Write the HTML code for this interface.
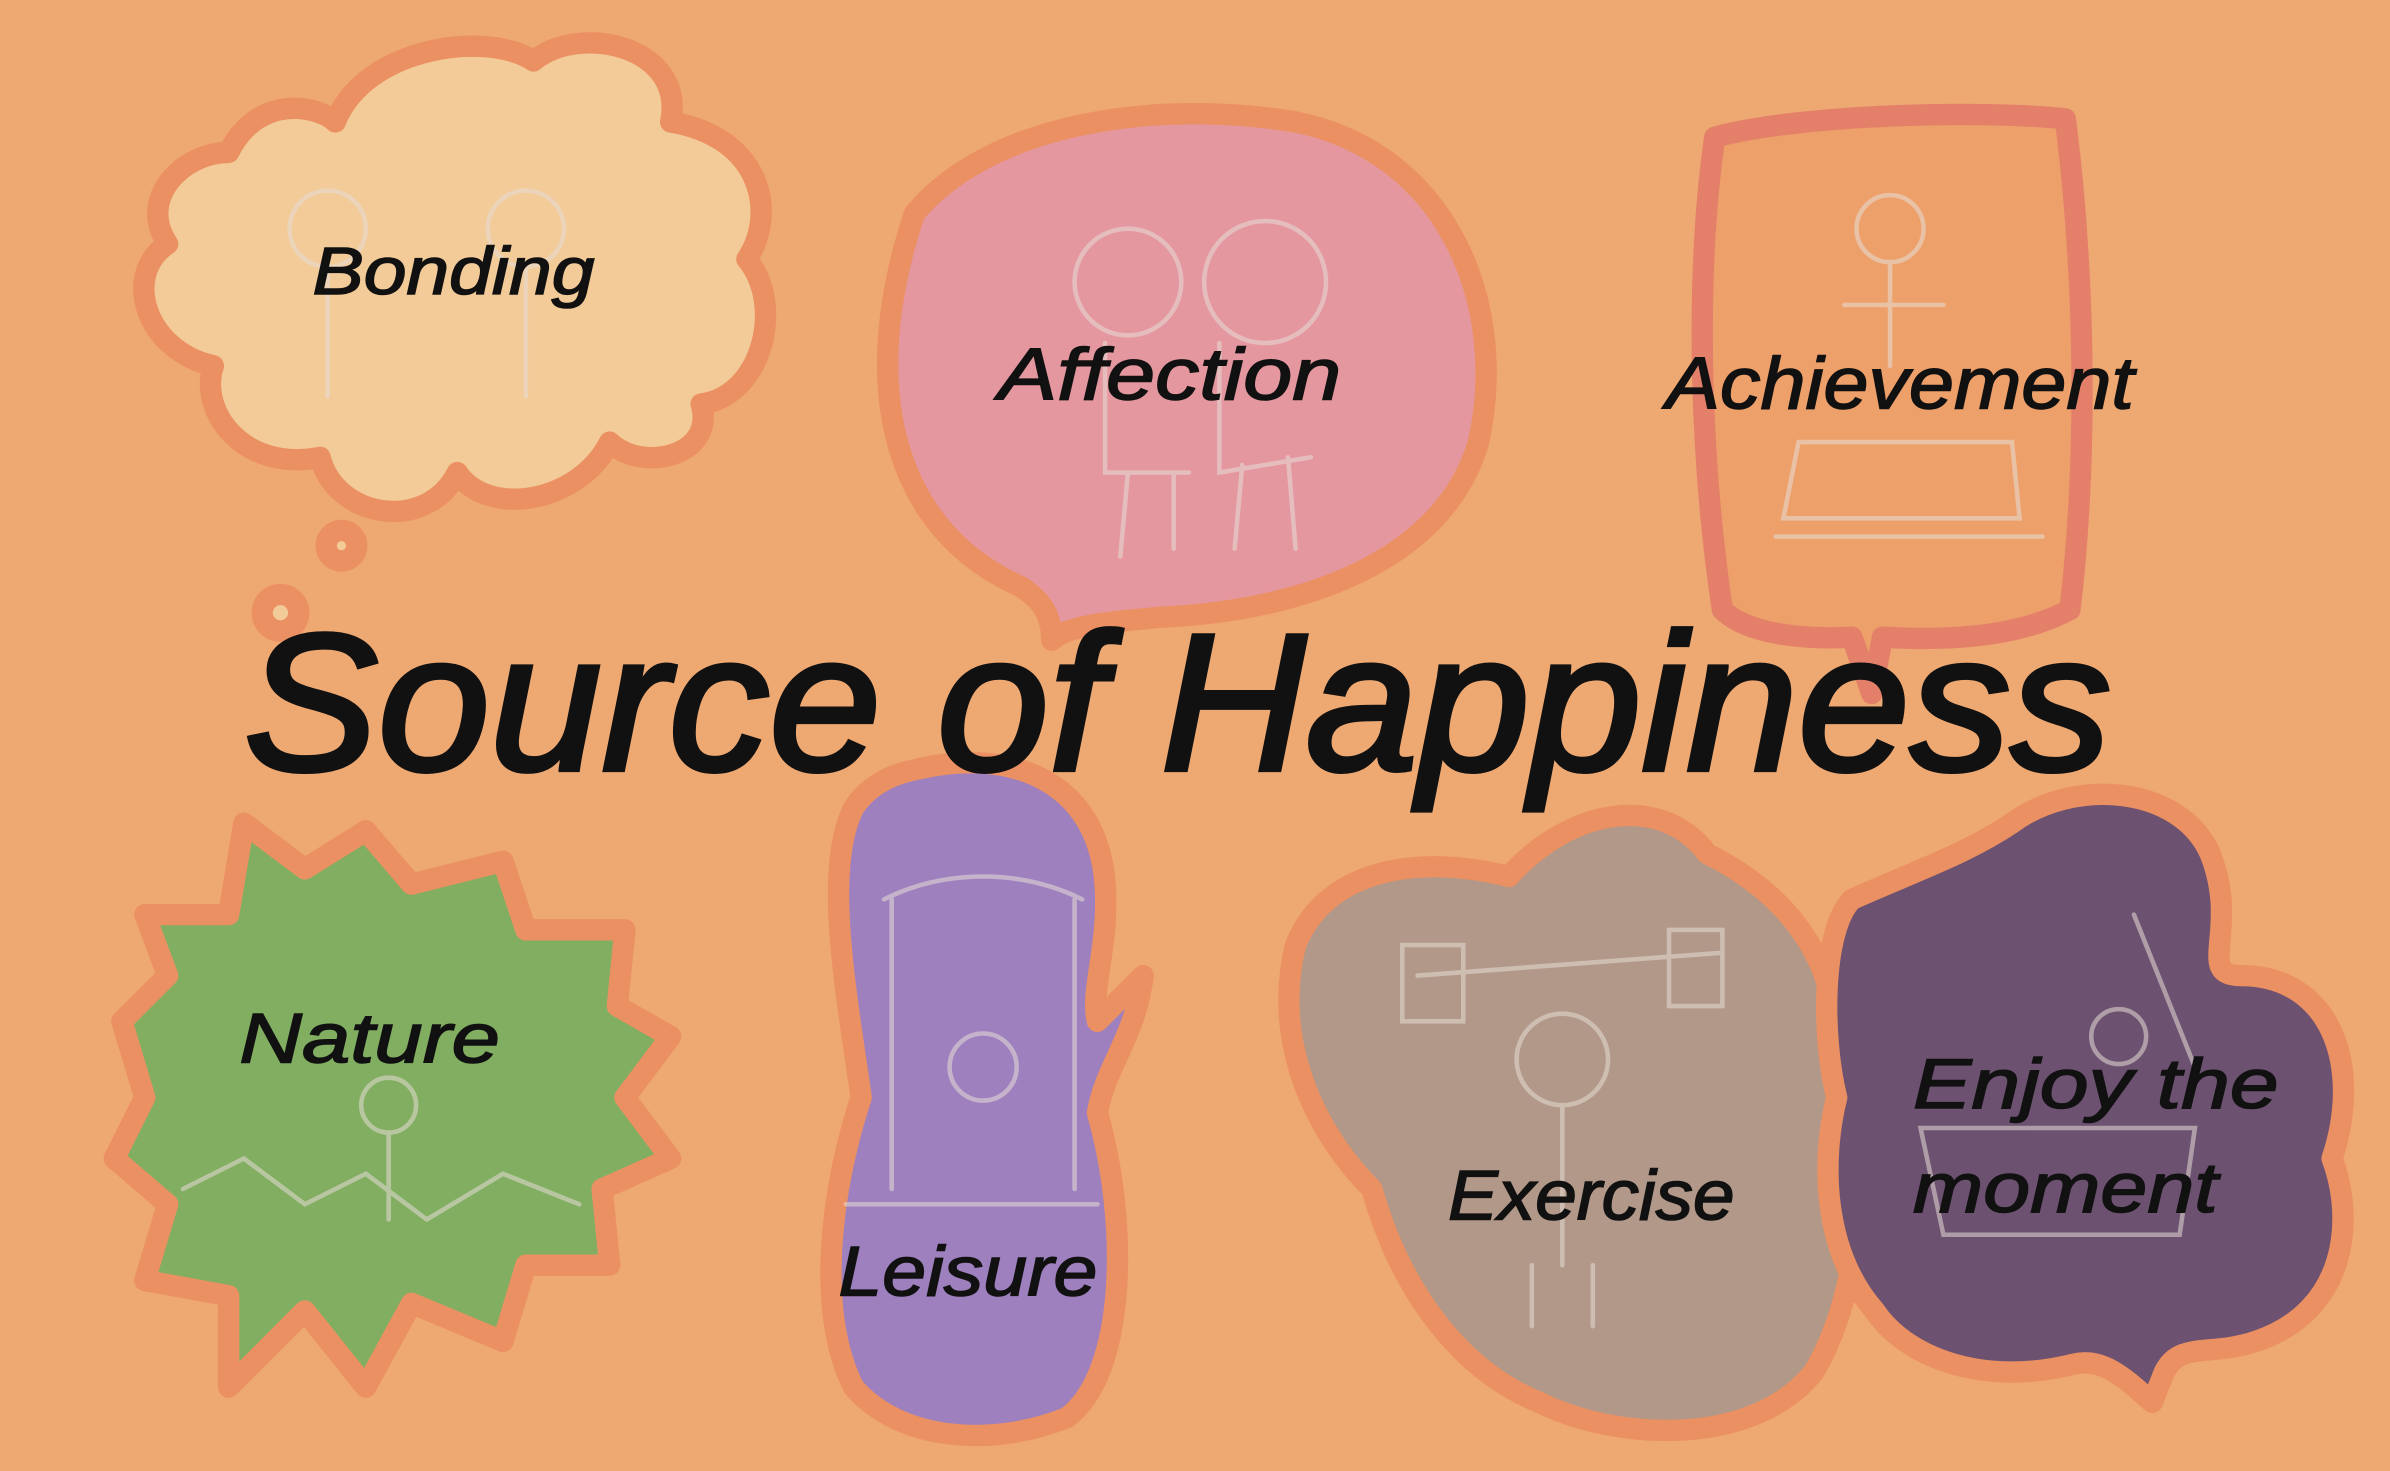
<!DOCTYPE html>
<html><head><meta charset="utf-8"><style>
html,body{margin:0;padding:0;background:#EEA872;}
svg{display:block}
text{font-family:"Liberation Sans",sans-serif;font-style:italic;fill:#111;stroke:#111;stroke-width:1;}
</style></head><body>
<svg width="2390" height="1471" viewBox="0 0 1568 965" preserveAspectRatio="none" xmlns="http://www.w3.org/2000/svg">
<rect width="1568" height="965" fill="#EEA872"/>
<g stroke="#EB9062" stroke-width="14" stroke-linejoin="round">
<path d="M150,100 C170,60 210,70 220,80 C240,30 320,20 350,40 C380,15 450,30 440,80 C500,90 510,140 490,170 C515,200 500,260 460,265 C470,300 420,310 400,290 C380,330 320,340 300,310 C280,350 220,340 210,300 C160,310 130,270 140,240 C95,230 80,180 110,160 C90,130 120,100 150,100 Z" fill="#F2CB98"/>
<circle cx="224" cy="358" r="10" fill="#F2CB98"/>
<circle cx="184" cy="402" r="12" fill="#F2CB98"/>
<path d="M600,140 C650,80 760,65 850,80 C950,100 990,200 970,290 C950,360 870,400 760,405 C730,408 700,410 690,420 C690,405 685,395 670,385 C590,350 560,260 600,140 Z" fill="#E4979E"/>
<path d="M1125,90 C1180,75 1300,72 1355,78 C1368,180 1370,300 1358,400 C1320,420 1270,420 1235,418 L1228,455 L1215,418 C1180,420 1145,415 1130,400 C1115,300 1112,180 1125,90 Z" fill="#EDA06A" stroke="#E4806A"/>
<path d="M160,540 L200,570 L240,545 L270,580 L330,565 L345,610 L410,610 L405,660 L440,680 L410,720 L440,760 L395,780 L400,830 L345,830 L330,880 L270,855 L240,910 L200,860 L150,910 L150,850 L95,840 L110,790 L75,760 L95,720 L80,670 L110,640 L95,600 L150,600 Z" fill="#82AE62"/>
<path d="M600,505 C660,490 720,510 725,580 C728,620 715,650 720,670 L750,640 C745,680 725,700 720,730 C740,800 740,900 700,930 C650,950 590,945 560,910 C535,860 545,780 565,720 C555,650 540,570 560,530 C570,515 585,508 600,505 Z" fill="#9E80BE"/>
<path d="M850,620 C870,570 930,560 990,575 C1030,530 1090,520 1120,560 C1160,580 1210,620 1205,700 C1230,760 1220,850 1190,900 C1150,950 1060,945 1010,920 C960,900 920,850 900,780 C860,740 835,680 850,620 Z" fill="#B29888"/>
<path d="M1215,590 C1260,570 1290,560 1320,540 C1360,510 1430,515 1450,560 C1470,610 1440,640 1470,640 C1530,640 1550,700 1530,760 C1545,800 1540,860 1480,880 C1450,890 1430,880 1420,900 L1412,920 C1395,905 1380,890 1360,895 C1300,910 1250,890 1230,860 C1195,820 1195,760 1205,720 C1195,680 1195,610 1215,590 Z" fill="#6C5170"/>
</g>
<g fill="none" stroke="#e6ddd6" stroke-width="3" opacity="0.55" stroke-linecap="round">
<circle cx="740" cy="185" r="35"/><circle cx="830" cy="185" r="40"/>
<path d="M725,225 L725,310 L780,310 M800,225 L800,310 L860,300 M740,310 L735,365 M770,310 L770,360 M815,305 L810,360 M845,300 L850,360"/>
<circle cx="1240" cy="150" r="22"/><path d="M1240,172 L1240,240 M1210,200 L1275,200 M1180,290 L1320,290 L1325,340 L1170,340 Z M1165,352 L1340,352"/>
<path d="M930,640 L1130,625 M920,620 L920,670 L960,670 L960,620 Z M1095,610 L1095,660 L1130,660 L1130,610 Z"/><circle cx="1025" cy="695" r="30"/><path d="M1025,725 L1025,830 M1005,830 L1005,870 M1045,830 L1045,870"/>
<path d="M580,590 C620,570 670,570 710,590 M585,590 L585,780 M705,590 L705,780 M555,790 L720,790"/><circle cx="645" cy="700" r="22"/>
<circle cx="255" cy="725" r="18"/><path d="M255,743 L255,800 M120,780 L160,760 L200,790 L240,770 L280,800 L330,770 L380,790"/>
<path d="M1260,740 L1440,740 L1430,810 L1275,810 Z"/><circle cx="1390" cy="680" r="18"/><path d="M1400,600 L1440,700"/>
<circle cx="215" cy="150" r="25"/><circle cx="345" cy="150" r="25"/><path d="M215,175 L215,260 M345,175 L345,260"/>
</g>
<text x="205" y="193" font-size="44" textLength="185" lengthAdjust="spacingAndGlyphs">Bonding</text>
<text x="655" y="262" font-size="48" textLength="225" lengthAdjust="spacingAndGlyphs">Affection</text>
<text x="1093" y="268" font-size="48" textLength="307" lengthAdjust="spacingAndGlyphs">Achievement</text>
<text x="160" y="505" font-size="128" textLength="1225" lengthAdjust="spacingAndGlyphs" style="stroke-width:3">Source of Happiness</text>
<text x="157" y="697" font-size="46" textLength="171" lengthAdjust="spacingAndGlyphs">Nature</text>
<text x="550" y="850" font-size="46" textLength="170" lengthAdjust="spacingAndGlyphs">Leisure</text>
<text x="950" y="800" font-size="46" textLength="188" lengthAdjust="spacingAndGlyphs">Exercise</text>
<text x="1255" y="727" font-size="46" textLength="240" lengthAdjust="spacingAndGlyphs">Enjoy  the</text>
<text x="1255" y="795" font-size="46" textLength="200" lengthAdjust="spacingAndGlyphs">moment</text>
</svg>
</body></html>
